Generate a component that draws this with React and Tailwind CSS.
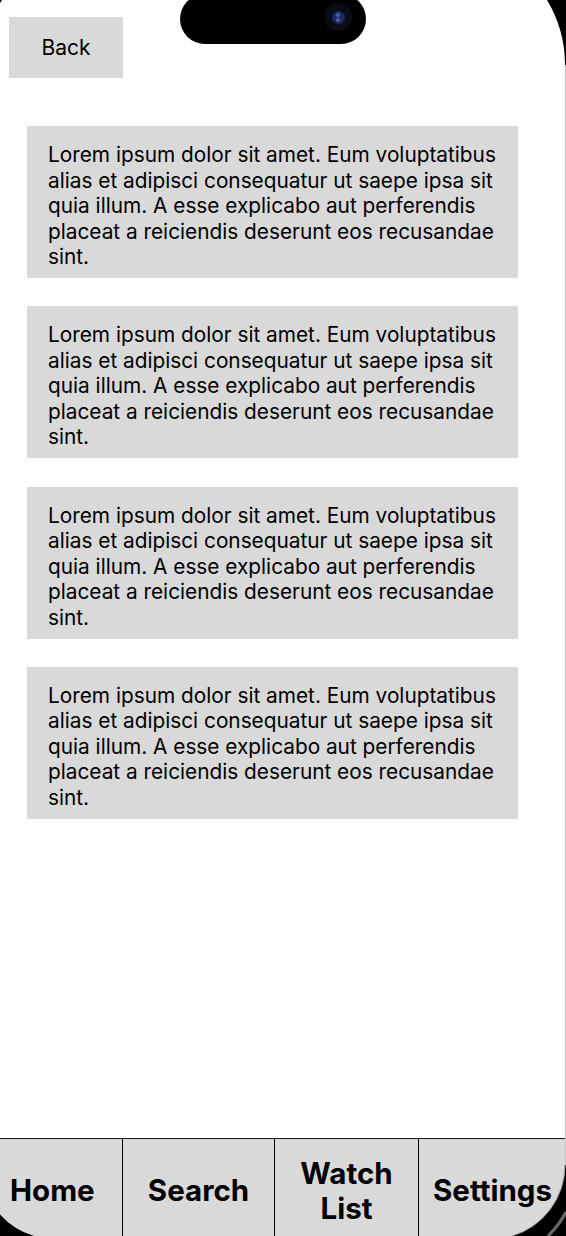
const cards = [1, 2, 3, 4];

const loremText =
  "Lorem ipsum dolor sit amet. Eum voluptatibus alias et adipisci consequatur ut saepe ipsa sit quia illum. A esse explicabo aut perferendis placeat a reiciendis deserunt eos recusandae sint.";

const PhoneFrame = () => (
  <svg
    className="absolute inset-0 pointer-events-none"
    width="566"
    height="1236"
    viewBox="0 0 566 1236"
  >
    {/* top-right corner */}
    <path d="M547 0 A126 126 0 0 1 565 65 L566 65 L566 0 Z" fill="#000" />
    {/* top-left corner */}
    <path d="M0 0 L2 0 A126 126 0 0 0 0 3 Z" fill="#000" />
    {/* bottom-left corner */}
    <path d="M0 1214.5 A74 74 0 0 0 34 1236 L0 1236 Z" fill="#000" />
    {/* bottom-right corner */}
    <path d="M565 1165 A74 74 0 0 1 512 1236 L566 1236 L566 1165 Z" fill="#000" />
    <path d="M565 1165 A74 74 0 0 1 512 1236" fill="none" stroke="#9a9a9a" strokeWidth="1" />
    <path d="M566 1212 A96 96 0 0 1 548 1236" fill="none" stroke="#6a6a6a" strokeWidth="3" />
    {/* right edge */}
    <rect x="565" y="65" width="1" height="1100" fill="#c8c8c8" />
  </svg>
);

const Notch = () => (
  <div className="absolute top-[-6px] left-[180px] w-[186px] h-[50px] rounded-full bg-black">
    <div className="absolute top-[9px] left-[144px] w-[28px] h-[28px] rounded-full bg-[#0b0b16] flex items-center justify-center">
      <div className="w-[13px] h-[13px] rounded-full bg-[#1d2a5c] flex flex-col items-center justify-center gap-[1px]">
        <div className="w-[4px] h-[4px] rounded-full bg-[#4a5fa8]" />
        <div className="w-[4px] h-[4px] rounded-full bg-[#4a5fa8]" />
      </div>
    </div>
  </div>
);

const App = () => {
  return (
    <div className="relative w-[566px] h-[1236px] overflow-hidden bg-white flex flex-col font-['Inter','Noto_Sans',sans-serif] text-black">
      <button className="mt-[17px] ml-[9px] w-[114px] h-[61px] bg-[#d9d9d9] text-[21px] flex items-center justify-center">
        Back
      </button>

      <div className="mt-[48px] ml-[27px] w-[491px] flex flex-col gap-[28.3px]">
        {cards.map((c) => (
          <div key={c} className="h-[152px] bg-[#d9d9d9] pl-[21px] pr-[12px] pt-[16px]">
            <p className="text-[20.8px] leading-[25.5px]">{loremText}</p>
          </div>
        ))}
      </div>

      <div className="flex-1" />

      <nav className="h-[98px] bg-[#d9d9d9] border-t-[1.5px] border-[#1a1a1a] flex text-[29.5px] font-bold leading-[35px]">
        <div className="w-[123px] flex items-center pt-[6px] pl-[10px] border-r border-black">Home</div>
        <div className="w-[152px] flex items-center justify-center pt-[6px] border-r border-black">Search</div>
        <div className="w-[144px] flex items-center justify-center pt-[6px] text-center border-r border-black">
          Watch
          <br />
          List
        </div>
        <div className="flex-1 flex items-center justify-center pt-[6px]">Settings</div>
      </nav>

      <Notch />
      <PhoneFrame />
    </div>
  );
};

export default App;
